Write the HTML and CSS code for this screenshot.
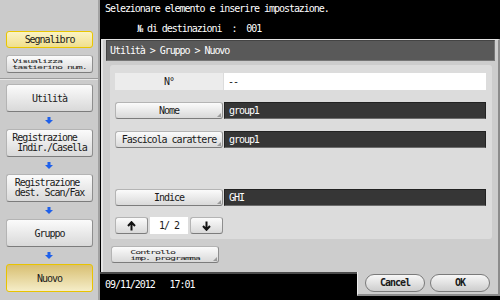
FILE: index.html
```html
<!DOCTYPE html>
<html lang="it">
<head>
    <meta charset="UTF-8">
    <meta name="viewport" content="width=device-width, initial-scale=1.0">
    <title>Gruppo - Nuovo</title>
    <link rel="stylesheet" href="styles.css">
</head>
<body>
    <aside class="side">
        <div class="side-top">
            <div class="btn side-btn btn-mark">Segnalibro</div>
            <div class="btn side-btn keypad"><span class="tiny">Visualizza<br>tastierino num.</span></div>
        </div>

        <div class="steps">
            <div class="btn step">Utilità</div>
            <div class="step-arrow"><svg width="8" height="7" viewBox="0 0 8 7"><path d="M2.5 0H5.5V3H8L4 7L0 3H2.5Z" fill="#1f60ea"/></svg></div>
            <div class="btn step"><span class="two">Registrazione<br> Indir./Casella</span></div>
            <div class="step-arrow"><svg width="8" height="7" viewBox="0 0 8 7"><path d="M2.5 0H5.5V3H8L4 7L0 3H2.5Z" fill="#1f60ea"/></svg></div>
            <div class="btn step"><span class="two">Registrazione<br>dest. Scan/Fax</span></div>
            <div class="step-arrow"><svg width="8" height="7" viewBox="0 0 8 7"><path d="M2.5 0H5.5V3H8L4 7L0 3H2.5Z" fill="#1f60ea"/></svg></div>
            <div class="btn step">Gruppo</div>
            <div class="step-arrow"><svg width="8" height="7" viewBox="0 0 8 7"><path d="M2.5 0H5.5V3H8L4 7L0 3H2.5Z" fill="#1f60ea"/></svg></div>
            <div class="btn step step-current">Nuovo</div>
        </div>
    </aside>

    <main class="main">
        <div class="msg">
            <p class="msg-line">Selezionare elemento e inserire impostazione.</p>
            <p class="msg-line dest">№ di destinazioni  :  001</p>
        </div>

        <section class="panel">
            <div class="panel-body">
                <div class="crumb">Utilità &gt; Gruppo &gt; Nuovo</div>

                <div class="form">
                    <div class="row">
                        <div class="label">N°</div>
                        <div class="value">--</div>
                    </div>
                    <div class="row">
                        <div class="btn label more">Nome</div>
                        <div class="field">group1</div>
                    </div>
                    <div class="row">
                        <div class="btn label more">Fascicola carattere</div>
                        <div class="field">group1</div>
                    </div>
                    <div class="row"></div>
                    <div class="row">
                        <div class="btn label more">Indice</div>
                        <div class="field">GHI</div>
                    </div>
                    <div class="row pager">
                        <div class="btn page-btn"><svg width="9" height="10" viewBox="0 0 9 10"><path d="M4.5 9.5V1.5M1 5L4.5 1.2L8 5" fill="none" stroke="#111" stroke-width="2"/></svg></div>
                        <div class="page-num">1/ 2</div>
                        <div class="btn page-btn"><svg width="9" height="10" viewBox="0 0 9 10"><path d="M4.5 0.5V8.5M1 5L4.5 8.8L8 5" fill="none" stroke="#111" stroke-width="2"/></svg></div>
                    </div>
                </div>

                <div class="btn prog more"><span class="tiny">Controllo<br>imp. programma</span></div>
            </div>

            <div class="panel-foot">
                <div class="clock">09/11/2012   17:01</div>
                <div class="actions">
                    <div class="pill">Cancel</div>
                    <div class="pill">OK</div>
                </div>
            </div>
        </section>
    </main>
</body>
</html>
```

FILE: styles.css
```css
body {
    margin: 0;
    width: 500px;
    height: 300px;
    display: flex;
    overflow: hidden;
    background-color: #000;
    font-family: "DejaVu Sans Mono", monospace;
    font-size: 10px;
    letter-spacing: -1.05px;
    color: #1a1a1a;
}

/* buttons */
.btn {
    position: relative;
    box-sizing: border-box;
    display: flex;
    align-items: center;
    justify-content: center;
    background: linear-gradient(#fbfbfb, #d9d9d9);
    border: 1px solid #b4b4b4;
    border-right-color: #8e8e8e;
    border-bottom-color: #7c7c7c;
    border-radius: 3px;
    white-space: pre;
}

.more::after {
    content: "";
    position: absolute;
    right: 1px;
    bottom: 1px;
    border-left: 4px solid transparent;
    border-bottom: 4px solid #9a9a9a;
}

.tiny {
    display: inline-block;
    text-align: left;
    line-height: 9px;
    transform: scaleY(0.58);
}

.two {
    display: inline-block;
    text-align: left;
    line-height: 10.5px;
}

/* sidebar */
.side {
    width: 98px;
    flex-shrink: 0;
    border-right: 2px solid #a2a2a2;
    background-color: #cbcbcb;
}

.side-top {
    box-sizing: border-box;
    height: 79px;
    padding-top: 31px;
    border-bottom: 1px solid #9c9c9c;
    box-shadow: 0 1px 0 #e6e6e6;
    display: flex;
    flex-direction: column;
    gap: 7px;
}

.side-btn {
    margin: 0 5px 0 6px;
    height: 18px;
}

.btn-mark {
    height: 17px;
    background: linear-gradient(#fbf3c4, #f0df8c);
    border: 1px solid #e9c600;
}

.steps {
    padding-top: 5px;
    display: flex;
    flex-direction: column;
}

.step {
    margin: 0 5px 0 6px;
    height: 28px;
}

.step-current {
    background: linear-gradient(#d8bf72, #f5edc8);
    border: 1px solid #e8c300;
}

.step-arrow {
    height: 17px;
    display: flex;
    align-items: center;
    justify-content: center;
}

/* main area */
.main {
    width: 400px;
    display: flex;
    flex-direction: column;
}

.msg {
    height: 39px;
    padding-left: 5px;
    color: #fff;
}

.msg-line {
    margin: 0;
    padding-top: 3px;
    line-height: 12px;
    white-space: pre;
}

.dest {
    padding-top: 8px;
    padding-left: 32px;
}

.panel {
    margin-left: 1px;
    display: flex;
    flex-direction: column;
}

.panel-body {
    box-sizing: border-box;
    height: 233px;
    padding: 0 3px;
    background-color: #cdcdcd;
    border-top: 1px solid #e4e4e4;
    border-left: 2px solid #e4e4e4;
    border-right: 2px solid #8c8c8c;
}

.crumb {
    box-sizing: border-box;
    height: 21px;
    padding-left: 3px;
    line-height: 19px;
    color: #fff;
    background-color: #595959;
    border: 1px solid #444;
    border-right-color: #777;
    border-bottom-color: #777;
}

.form {
    box-sizing: border-box;
    height: 174px;
    margin: 4px 3px 0 4px;
    padding: 8px 6px 0 5px;
    background-color: #dcdcdc;
    border-radius: 3px;
    display: flex;
    flex-direction: column;
    gap: 12px;
}

.row {
    height: 17px;
    display: flex;
    gap: 1px;
}

.label {
    width: 108px;
    flex-shrink: 0;
    display: flex;
    align-items: center;
    justify-content: center;
}

.row > .label:not(.btn) {
    background-color: #ececec;
}

.value {
    flex: 1;
    padding-left: 4px;
    line-height: 17px;
    background-color: #fff;
}

.field {
    flex: 1;
    box-sizing: border-box;
    padding-left: 4px;
    line-height: 15px;
    color: #fff;
    background-color: #363636;
    border: 1px solid #222;
    border-bottom-color: #6c6c6c;
}

.pager {
    margin-top: -1px;
    gap: 2px;
}

.page-btn {
    width: 33px;
}

.page-num {
    width: 38px;
    line-height: 17px;
    text-align: center;
    background-color: #fff;
    white-space: pre;
}

.prog {
    width: 108px;
    height: 17px;
    margin: 7px 0 0 5px;
}

/* footer */
.panel-foot {
    height: 28px;
    display: flex;
    align-items: flex-start;
}

.clock {
    box-sizing: border-box;
    width: 257px;
    height: 28px;
    margin-left: -1px;
    padding: 4px 0 0 5px;
    line-height: 14px;
    color: #fff;
    background-color: #000;
    border-top: 2px solid #4b4b4b;
    white-space: pre;
}

.actions {
    box-sizing: border-box;
    flex: 1;
    height: 24px;
    padding: 2px 0 0 7px;
    display: flex;
    gap: 5px;
    background-color: #cdcdcd;
    border-left: 1px solid #ececec;
    border-right: 2px solid #8c8c8c;
    border-bottom: 2px solid #8c8c8c;
}

.pill {
    box-sizing: border-box;
    width: 60px;
    height: 18px;
    line-height: 16px;
    text-align: center;
    font-weight: bold;
    background: linear-gradient(#f7f7f7, #cdcdcd);
    border: 1px solid #7a7a7a;
    border-radius: 9px;
}
```
